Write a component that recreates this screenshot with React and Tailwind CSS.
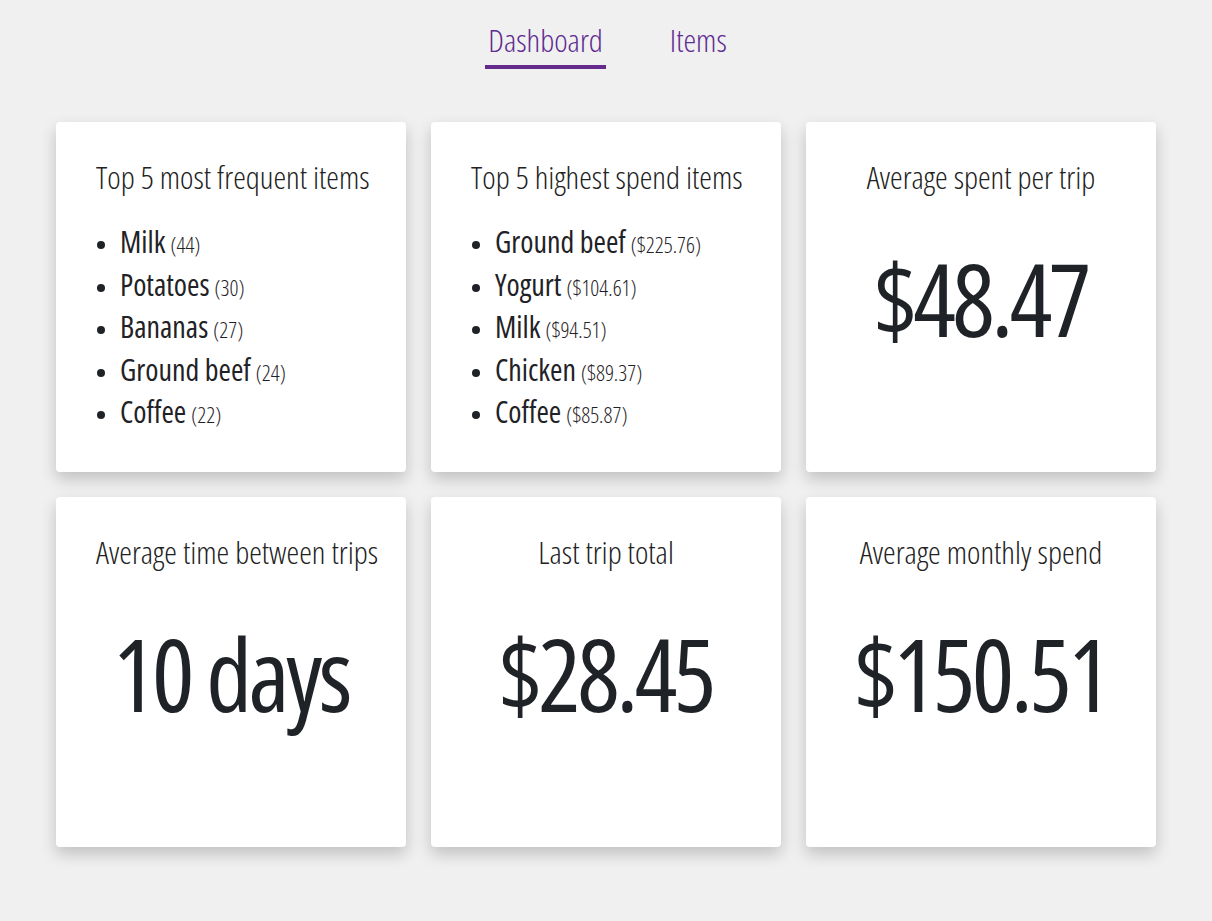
import React from "react";

const font = { fontFamily: '"Open Sans", "Liberation Sans", sans-serif', fontStretch: "75%" };

function Card({ title, children }) {
  return (
    <div className="bg-white rounded-[4px] shadow-[0_7px_16px_rgba(0,0,0,0.2)] h-[350px] flex flex-col px-10 pt-[35px]">
      <div className="text-center text-[32px] font-light text-[#222] leading-[40px] whitespace-nowrap">{title}</div>
      {children}
    </div>
  );
}

function List({ items }) {
  return (
    <ul className="list-disc pl-6 mt-[24px] text-[#1f2226]">
      {items.map(([n, c]) => (
        <li key={n} className="leading-[42.5px] text-[30px] font-medium marker:text-[22px] whitespace-nowrap">
          <span className="leading-none">{n}</span>
          <span className="leading-none text-[22px] font-light ml-[5px]">({c})</span>
        </li>
      ))}
    </ul>
  );
}

function Big({ children }) {
  return (
    <div className="mt-[51px] text-center text-[100px] font-normal tracking-[-3.5px] text-[#1f2226] leading-[100px] whitespace-nowrap">
      {children}
    </div>
  );
}

export default function App() {
  return (
    <div className="min-h-[921px] bg-[#f0f0f0]" style={font}>
      <nav className="flex justify-center gap-[64px] pt-[20px]">
        <div className="flex flex-col items-center">
          <span className="text-[32px] font-light text-[#5f2c91] leading-[40px] px-[3px]">Dashboard</span>
          <div className="h-[4px] w-full bg-[#642a8c] mt-[5px]" />
        </div>
        <div className="flex flex-col items-center">
          <span className="text-[32px] font-light text-[#5f2c91] leading-[40px]">Items</span>
        </div>
      </nav>
      <div className="w-[1100px] mx-auto mt-[53px] grid grid-cols-3 gap-[25px]">
        <Card title="Top 5 most frequent items">
          <List items={[["Milk", "44"], ["Potatoes", "30"], ["Bananas", "27"], ["Ground beef", "24"], ["Coffee", "22"]]} />
        </Card>
        <Card title="Top 5 highest spend items">
          <List items={[["Ground beef", "$225.76"], ["Yogurt", "$104.61"], ["Milk", "$94.51"], ["Chicken", "$89.37"], ["Coffee", "$85.87"]]} />
        </Card>
        <Card title="Average spent per trip">
          <Big>$48.47</Big>
        </Card>
        <Card title="Average time between trips">
          <Big>10 days</Big>
        </Card>
        <Card title="Last trip total">
          <Big>$28.45</Big>
        </Card>
        <Card title="Average monthly spend">
          <Big>$150.51</Big>
        </Card>
      </div>
    </div>
  );
}
